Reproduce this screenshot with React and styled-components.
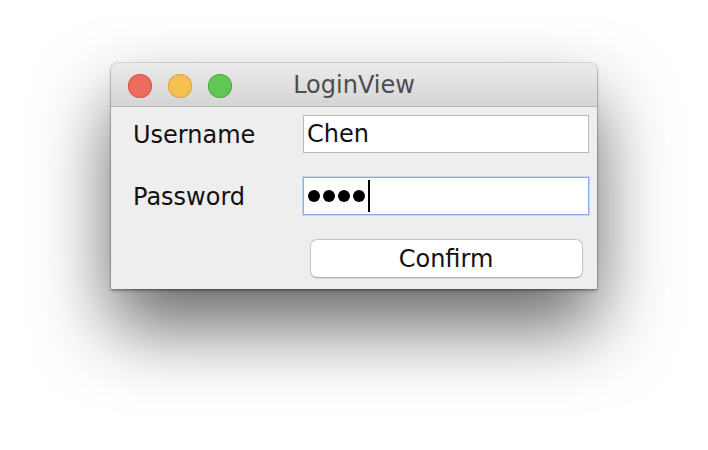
import styled, { createGlobalStyle } from "styled-components"

const GlobalStyle = createGlobalStyle`
  html, body {
    margin: 0;
    padding: 0;
    background: #ffffff;
  }
  body {
    font-family: "DejaVu Sans", "Liberation Sans", sans-serif;
  }
`

const Lights = [
  { fill: "#ee6b60", edge: "#d65a50" },
  { fill: "#f6c050", edge: "#dca43c" },
  { fill: "#62c655", edge: "#51ab43" },
]

function TitleBar({ title }) {
  return (
    <Bar>
      <LightGroup>
        {Lights.map((l, i) => (
          <Light key={i} $fill={l.fill} $edge={l.edge} />
        ))}
      </LightGroup>
      <Title>{title}</Title>
    </Bar>
  )
}

function LoginForm() {
  return (
    <Form>
      <Label>Username</Label>
      <Field>
        <FieldText>Chen</FieldText>
      </Field>
      <Label>Password</Label>
      <Field $focused>
        <Dots>
          {[0, 1, 2, 3].map((i) => (
            <Dot key={i} />
          ))}
        </Dots>
        <Caret />
      </Field>
      <span />
      <Button type="button">Confirm</Button>
    </Form>
  )
}

export default function App() {
  return (
    <>
      <GlobalStyle />
      <Page>
        <Window>
          <TitleBar title="LoginView" />
          <LoginForm />
        </Window>
      </Page>
    </>
  )
}

const Page = styled.div`
  width: 708px;
  height: 450px;
  padding: 63px 0 0 111px;
  box-sizing: border-box;
  overflow: hidden;
`

const Window = styled.div`
  width: 486px;
  background: #eeeeee;
  border-radius: 7px 7px 0 0;
  box-shadow: 0 0 0 1px rgba(0, 0, 0, 0.12), 0 2px 3px rgba(0, 0, 0, 0.3),
    0 38px 75px rgba(0, 0, 0, 0.6);
  overflow: hidden;
`

const Bar = styled.div`
  position: relative;
  height: 44px;
  display: flex;
  align-items: center;
  justify-content: center;
  background: linear-gradient(#ebebeb, #d5d5d5);
  border-bottom: 1px solid #b4b4b4;
  box-sizing: border-box;
`

const LightGroup = styled.div`
  position: absolute;
  left: 17px;
  top: 11px;
  display: flex;
  gap: 16px;
`

const Light = styled.span`
  width: 24px;
  height: 24px;
  border-radius: 50%;
  background: ${(p) => p.$fill};
  box-shadow: inset 0 0 0 1px ${(p) => p.$edge};
`

const Title = styled.div`
  font-size: 24px;
  color: #4d4d4d;
  margin-top: 1px;
`

const Form = styled.div`
  display: grid;
  grid-template-columns: 170px 286px;
  grid-auto-rows: 38px;
  row-gap: 24px;
  align-items: center;
  padding: 8px 8px 12px 22px;
`

const Label = styled.div`
  font-size: 24px;
  color: #111111;
  padding-top: 1px;
`

const Field = styled.div`
  height: 38px;
  box-sizing: border-box;
  background: #ffffff;
  border: 1px solid ${(p) => (p.$focused ? "#84aeea" : "#b8b8b8")};
  box-shadow: ${(p) => (p.$focused ? "0 0 0 1px rgba(132, 174, 234, 0.35)" : "none")};
  display: flex;
  align-items: center;
  padding-left: 3px;
`

const FieldText = styled.span`
  font-size: 24px;
  color: #111111;
`

const Dots = styled.div`
  display: flex;
  gap: 3px;
  margin-left: 1px;
`

const Dot = styled.span`
  width: 12px;
  height: 12px;
  border-radius: 50%;
  background: #000000;
`

const Caret = styled.span`
  width: 2px;
  height: 32px;
  background: #000000;
  margin-left: 3px;
`

const Button = styled.button`
  justify-self: center;
  width: 273px;
  height: 39px;
  background: #ffffff;
  border: 1px solid #c4c4c4;
  border-bottom-color: #a9a9a9;
  border-radius: 7px;
  box-shadow: 0 1px 1px rgba(0, 0, 0, 0.08);
  font-family: "DejaVu Sans", "Liberation Sans", sans-serif;
  font-size: 24px;
  color: #111111;
  padding: 1px 0 0;
`
